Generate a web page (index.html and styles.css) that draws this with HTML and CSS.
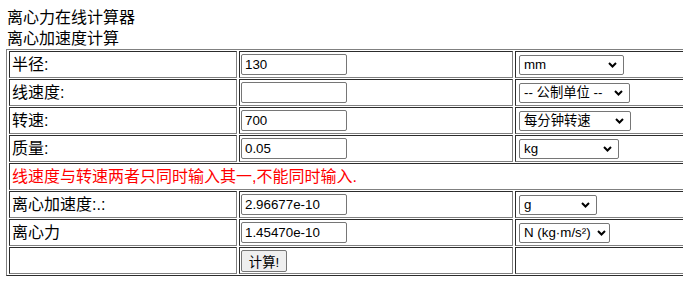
FILE: index.html
```html
<!DOCTYPE html>
<html lang="zh-CN">
<head>
<meta charset="utf-8">
<title>离心力在线计算器</title>
<link rel="stylesheet" href="styles.css">
</head>
<body>
<div class="title">离心力在线计算器</div>
<div class="title">离心加速度计算</div>
<table class="calc">
  <colgroup>
    <col class="c1"><col class="c2"><col class="c3">
  </colgroup>
  <tr>
    <td class="label">半径:</td>
    <td class="field"><input class="txt" type="text" value="130"></td>
    <td class="field"><span class="selwrap"><select class="sel w-mm"><option>mm</option><option>cm</option><option>m</option></select><svg class="chev" width="9" height="6" viewBox="0 0 9 6"><path d="M1 1 L4.5 4.5 L8 1" fill="none" stroke="#000" stroke-width="2"/></svg></span></td>
  </tr>
  <tr>
    <td class="label">线速度:</td>
    <td class="field"><input class="txt" type="text" value=""></td>
    <td class="field"><span class="selwrap"><select class="sel w-unit"><option>-- 公制单位 --</option><option>m/s</option></select><svg class="chev" width="9" height="6" viewBox="0 0 9 6"><path d="M1 1 L4.5 4.5 L8 1" fill="none" stroke="#000" stroke-width="2"/></svg></span></td>
  </tr>
  <tr>
    <td class="label">转速:</td>
    <td class="field"><input class="txt" type="text" value="700"></td>
    <td class="field"><span class="selwrap"><select class="sel w-rpm"><option>每分钟转速</option><option>每秒转速</option></select><svg class="chev" width="9" height="6" viewBox="0 0 9 6"><path d="M1 1 L4.5 4.5 L8 1" fill="none" stroke="#000" stroke-width="2"/></svg></span></td>
  </tr>
  <tr>
    <td class="label">质量:</td>
    <td class="field"><input class="txt" type="text" value="0.05"></td>
    <td class="field"><span class="selwrap"><select class="sel w-kg"><option>kg</option><option>g</option></select><svg class="chev" width="9" height="6" viewBox="0 0 9 6"><path d="M1 1 L4.5 4.5 L8 1" fill="none" stroke="#000" stroke-width="2"/></svg></span></td>
  </tr>
  <tr>
    <td class="note" colspan="3">线速度与转速两者只同时输入其一,不能同时输入.</td>
  </tr>
  <tr>
    <td class="label">离心加速度:.:</td>
    <td class="field"><input class="txt" type="text" value="2.96677e-10"></td>
    <td class="field"><span class="selwrap"><select class="sel w-g"><option>g</option><option>m/s²</option></select><svg class="chev" width="9" height="6" viewBox="0 0 9 6"><path d="M1 1 L4.5 4.5 L8 1" fill="none" stroke="#000" stroke-width="2"/></svg></span></td>
  </tr>
  <tr>
    <td class="label">离心力</td>
    <td class="field"><input class="txt" type="text" value="1.45470e-10"></td>
    <td class="field"><span class="selwrap"><select class="sel w-n"><option>N (kg·m/s²)</option><option>kN</option></select><svg class="chev chev-tight" width="9" height="6" viewBox="0 0 9 6"><path d="M1 1 L4.5 4.5 L8 1" fill="none" stroke="#000" stroke-width="2"/></svg></span></td>
  </tr>
  <tr>
    <td class="label"></td>
    <td class="field"><button class="btn" type="button">计算!</button></td>
    <td class="field"></td>
  </tr>
</table>
</body>
</html>
```

FILE: styles.css
```css
html, body {
  background: #ffffff;
}
body {
  margin: 7px 0 0 6px;
  font-family: "Liberation Sans", "Noto Sans CJK SC", Arial, sans-serif;
  font-size: 16px;
  color: #000000;
  width: 900px;
}
.title {
  line-height: 21px;
  height: 21px;
  padding-left: 1px;
}
.calc {
  border: 1px outset #808080;
  border-spacing: 2px 1px;
  table-layout: fixed;
  width: 786px;
}
.c1 { width: 228px; }
.c2 { width: 274px; }
.c3 { width: 274px; }
.calc tr {
  height: 27px;
}
.calc td {
  border: 1px inset #808080;
  padding: 0 1px;
  vertical-align: middle;
  white-space: nowrap;
}
.label {
  padding-left: 2px !important;
  line-height: 20px;
}
.note {
  color: #ff0000;
  padding-left: 2px !important;
  line-height: 20px;
}
.txt {
  box-sizing: border-box;
  width: 106px;
  height: 21px;
  margin: 0;
  padding: 1px 3px;
  border: 1px solid #767676;
  border-radius: 2px;
  font-family: "Liberation Sans", Arial, sans-serif;
  font-size: 13.33px;
  color: #000000;
  vertical-align: middle;
}
.selwrap {
  position: relative;
  display: inline-block;
  margin-left: 2px;
  vertical-align: middle;
  line-height: 0;
}
.sel {
  -webkit-appearance: none;
  appearance: none;
  box-sizing: border-box;
  height: 20px;
  margin: 0;
  padding: 0 12px 0 4px;
  border: 1px solid #767676;
  border-radius: 2px;
  background: #ffffff;
  font-family: "Liberation Sans", "Noto Sans CJK SC", Arial, sans-serif;
  font-size: 13.33px;
  line-height: 18px;
  color: #000000;
}
.chev {
  position: absolute;
  right: 7px;
  top: 7px;
  pointer-events: none;
}
.chev-tight {
  right: 4px;
}
.w-mm { width: 105px; }
.w-unit { width: 111px; }
.w-rpm { width: 112px; }
.w-kg { width: 100px; }
.w-g { width: 78px; }
.w-n { width: 91px; }
.btn {
  box-sizing: border-box;
  height: 22px;
  width: 46px;
  margin: 0;
  padding: 1px 4px;
  font-family: "Liberation Sans", "Noto Sans CJK SC", Arial, sans-serif;
  font-size: 13.33px;
  color: #000000;
  background: #efefef;
  border: 1px solid #767676;
  border-radius: 2px;
  vertical-align: middle;
}
```
